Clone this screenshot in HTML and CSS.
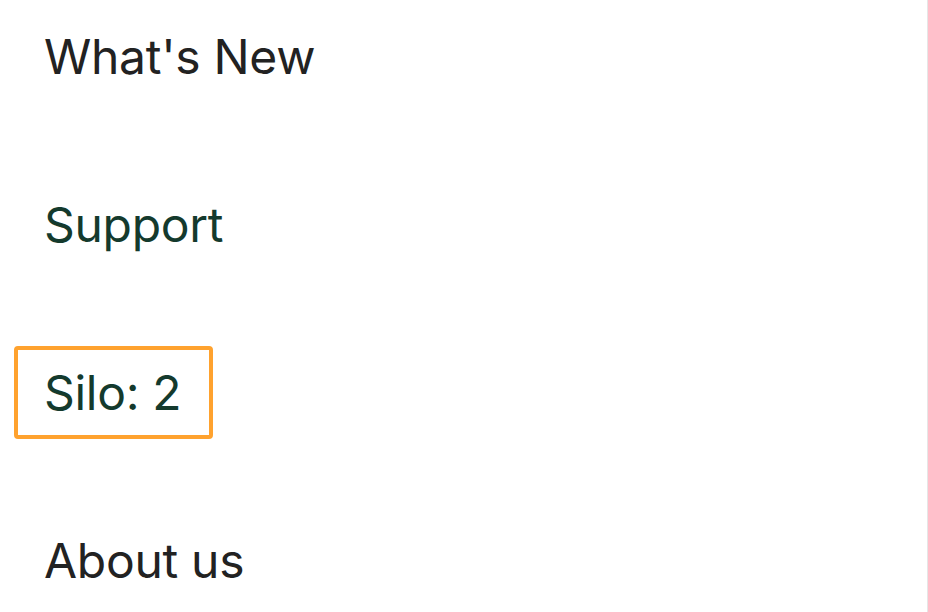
FILE: index.html
```html
<!DOCTYPE html>
<html lang="en">
<head>
<meta charset="utf-8">
<title>Menu</title>
<link rel="stylesheet" href="styles.css">
</head>
<body>
<nav class="menu">
  <ul class="menu-list">
    <li class="menu-item"><a class="menu-link menu-link--dark" href="#">What's New</a></li>
    <li class="menu-item"><a class="menu-link menu-link--green" href="#">Support</a></li>
    <li class="menu-item"><a class="menu-link menu-link--green menu-link--focus" href="#">Silo: 2</a></li>
    <li class="menu-item"><a class="menu-link menu-link--dark" href="#">About us</a></li>
  </ul>
</nav>
</body>
</html>
```

FILE: styles.css
```css
html, body {
  margin: 0;
  padding: 0;
  background: #ffffff;
}

body {
  font-family: "Inter", "Liberation Sans", sans-serif;
  height: 612px;
  overflow: hidden;
}

.menu {
  box-sizing: border-box;
  height: 612px;
  border-right: 1px solid #e6e6e6;
  padding-top: 10px;
  padding-left: 14px;
}

.menu-list {
  list-style: none;
  margin: 0;
  padding: 0;
  display: flex;
  flex-direction: column;
  align-items: flex-start;
  gap: 75px;
}

.menu-item {
  display: block;
}

.menu-link {
  display: inline-block;
  font-size: 48px;
  line-height: 85px;
  padding: 0 28px 0 26px;
  border: 4px solid transparent;
  border-radius: 4px;
  text-decoration: none;
  letter-spacing: -0.3px;
}

.menu-link--dark {
  color: #222222;
}

.menu-link--green {
  color: #143a2d;
}

.menu-link--focus {
  border-color: #ffa22e;
}
```
